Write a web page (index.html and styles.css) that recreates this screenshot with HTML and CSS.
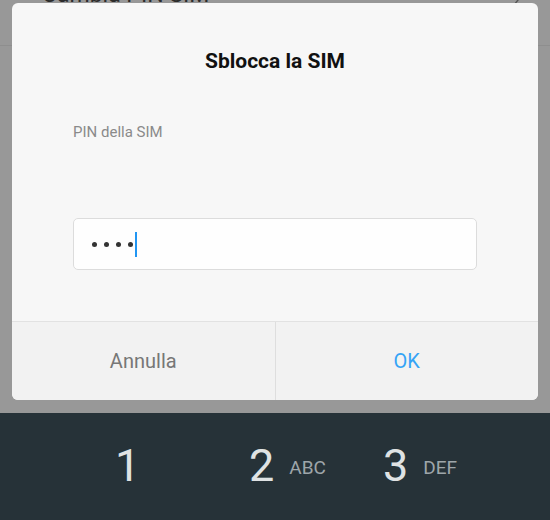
FILE: index.html
```html
<!DOCTYPE html>
<html lang="it">
<head>
    <meta charset="UTF-8">
    <meta name="viewport" content="width=device-width, initial-scale=1.0">
    <title>Sblocca la SIM</title>
    <link rel="stylesheet" href="styles.css">
</head>
<body>
    <div class="screen">
        <div class="settings">
            <div class="settings-row">
                <span class="row-title">Cambia PIN SIM</span>
                <svg class="chevron" width="12" height="20" viewBox="0 0 12 20">
                    <path d="M2 -6 L10 4 L2 14" fill="none" stroke="#555" stroke-width="1.4"/>
                </svg>
            </div>
        </div>

        <div class="keyboard">
            <div class="key"><span class="digit">1</span></div>
            <div class="key"><span class="digit">2</span><span class="letters">ABC</span></div>
            <div class="key"><span class="digit">3</span><span class="letters">DEF</span></div>
        </div>

        <div class="dialog">
            <div class="dialog-body">
                <h2 class="dialog-title">Sblocca la SIM</h2>
                <label class="pin-label" for="pin">PIN della SIM</label>
                <div class="pin-input" id="pin">
                    <span class="dot"></span>
                    <span class="dot"></span>
                    <span class="dot"></span>
                    <span class="dot"></span>
                    <span class="cursor"></span>
                </div>
            </div>
            <div class="dialog-actions">
                <button class="btn btn-cancel">Annulla</button>
                <button class="btn btn-ok">OK</button>
            </div>
        </div>
    </div>
</body>
</html>
```

FILE: styles.css
```css
body {
    margin: 0;
    font-family: Roboto, 'Noto Sans', Arial, sans-serif;
    background: #989898;
}
.screen {
    position: relative;
    width: 550px;
    height: 520px;
    overflow: hidden;
    display: flex;
    flex-direction: column;
}
.settings {
    height: 413px;
    background: #989898;
}
.settings-row {
    height: 45px;
    border-bottom: 1px solid #8e8e8e;
    display: flex;
    justify-content: space-between;
    align-items: flex-start;
    padding: 0 30px 0 42px;
    overflow: hidden;
}
.row-title {
    font-size: 23px;
    line-height: 23px;
    margin-top: -17px;
    color: #2c2c2c;
}
.chevron {
    margin-top: -4px;
}
.keyboard {
    flex: 1;
    background: #263238;
    display: grid;
    grid-template-columns: 134px 134px 134px;
    padding-left: 115px;
    padding-top: 30px;
    align-content: start;
}
.key {
    display: flex;
    align-items: center;
    gap: 15px;
    height: 45px;
}
.digit {
    font-size: 45px;
    font-weight: 400;
    color: #dfe2e3;
    line-height: 45px;
}
.letters {
    font-size: 19px;
    color: #9ea6aa;
    margin-top: 4px;
}
.dialog {
    position: absolute;
    top: 3px;
    left: 12px;
    width: 526px;
    height: 397px;
    background: #f7f7f7;
    border-radius: 6px;
    overflow: hidden;
    display: flex;
    flex-direction: column;
}
.dialog-body {
    height: 318px;
    padding: 0 61px;
    display: flex;
    flex-direction: column;
}
.dialog-title {
    margin: 46px 0 0;
    font-size: 21px;
    line-height: 24px;
    font-weight: 700;
    color: #111;
    text-align: center;
}
.pin-label {
    margin-top: 50px;
    font-size: 15px;
    line-height: 18px;
    color: #8a8a8a;
}
.pin-input {
    margin-top: 77px;
    height: 50px;
    background: #fefefe;
    border: 1px solid #dcdcdc;
    border-radius: 5px;
    display: flex;
    align-items: center;
    padding-left: 18px;
    gap: 7px;
}
.dot {
    width: 5px;
    height: 5px;
    border-radius: 50%;
    background: #333;
}
.cursor {
    width: 2px;
    height: 25px;
    margin-left: -5px;
    background: #2196f3;
}
.dialog-actions {
    flex: 1;
    display: flex;
    background: #f2f2f2;
    border-top: 1px solid #e2e2e2;
}
.btn {
    flex: 1;
    border: none;
    background: transparent;
    font-family: inherit;
    font-size: 20px;
    padding: 0;
    cursor: pointer;
}
.btn-cancel {
    color: #777;
    border-right: 1px solid #dedede;
}
.btn-ok {
    color: #35a4f6;
}
```
